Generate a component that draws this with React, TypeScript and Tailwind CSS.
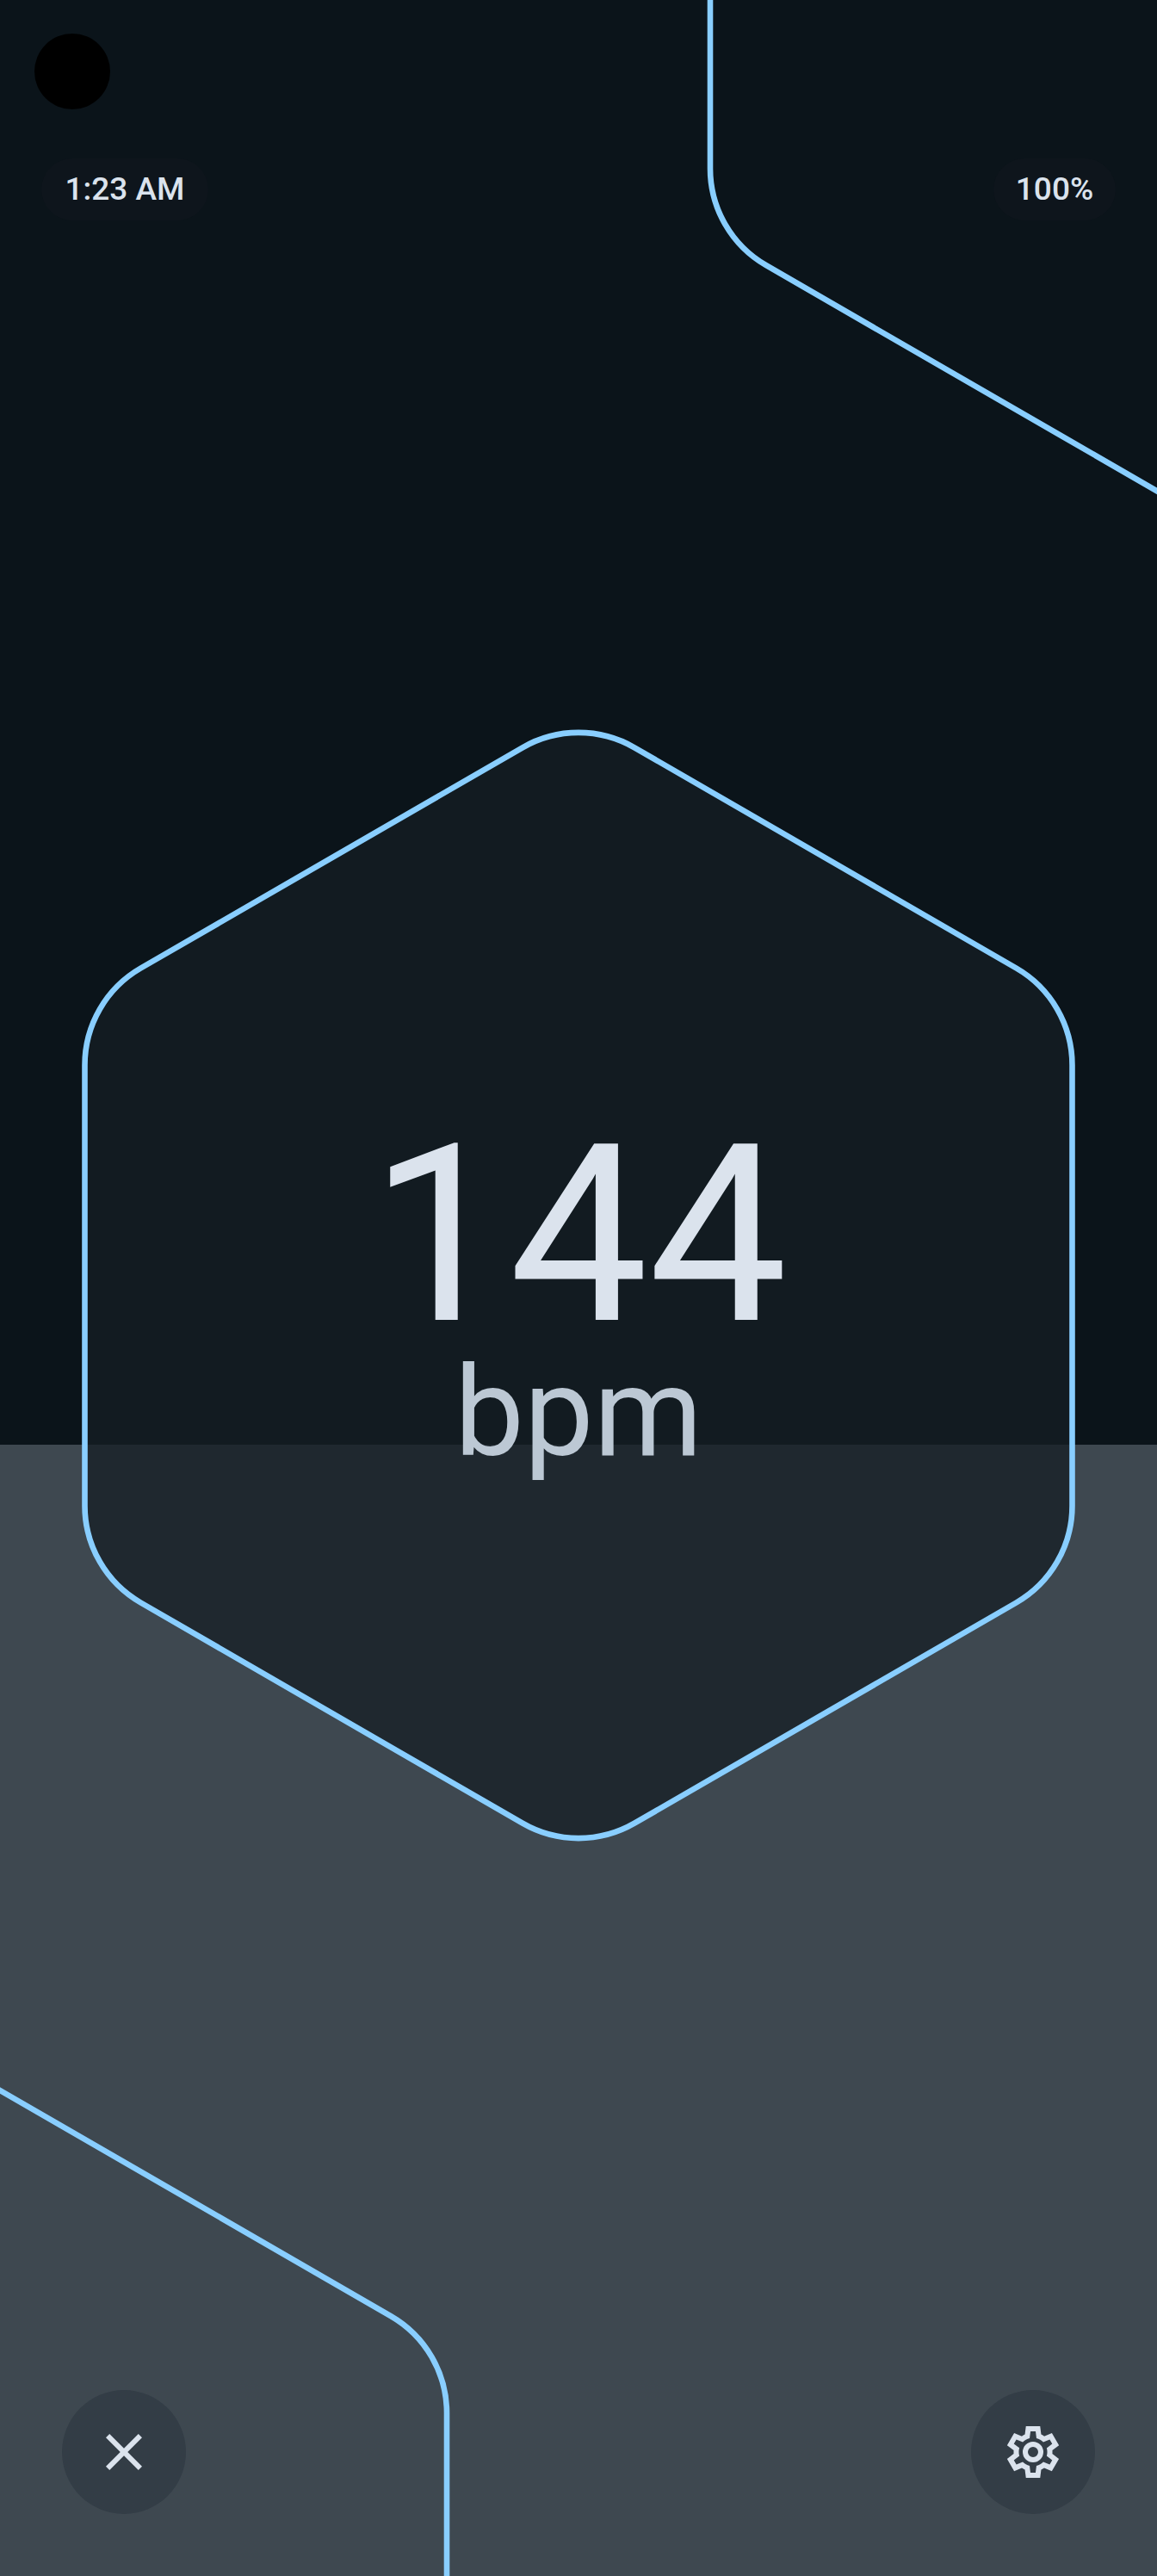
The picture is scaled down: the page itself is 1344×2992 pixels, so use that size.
import { MdClose } from "react-icons/md";

const OUTLINE = "#89ceff";

function Backdrop() {
  return (
    <div aria-hidden="true" className="absolute inset-0 flex flex-col">
      <div className="flex-[1678] bg-[#0b141a]" />
      <div className="flex-[1314] bg-[#3e4850]" />
    </div>
  );
}

function Hexagons() {
  return (
    <svg
      aria-hidden="true"
      viewBox="0 0 1344 2992"
      preserveAspectRatio="xMidYMid slice"
      className="absolute inset-0 h-full w-full"
      fill="none"
      stroke={OUTLINE}
      strokeWidth="6.6"
    >
      <path d="M825 -10V195.700A130 130 0 0 0 890 308.200L1364 581.900" />
      <path d="M-20 2416.400L454 2690.100A130 130 0 0 1 519 2802.600V3010" />
      <path
        d="M737 868.300L1180.500 1124.500A130 130 0 0 1 1245.500 1237V1749A130 130 0 0 1 1180.500 1861.500L737 2117.700A130 130 0 0 1 607 2117.700L163.500 1861.500A130 130 0 0 1 98.500 1749V1237A130 130 0 0 1 163.500 1124.500L607 868.300A130 130 0 0 1 737 868.300Z"
        fill="#161d24"
        fillOpacity="0.75"
      />
    </svg>
  );
}

function SettingsIcon() {
  return (
    <svg viewBox="0 0 24 24" className="size-18" fill="currentColor" aria-hidden="true">
      <path
        fillRule="evenodd"
        d="M9.250 22L8.850 18.800Q8.525 18.675 8.238 18.500T7.675 18.125L4.700 19.375L1.950 14.625L4.525 12.675Q4.500 12.500 4.500 12.338V11.663Q4.500 11.500 4.525 11.325L1.950 9.375L4.700 4.625L7.675 5.875Q7.950 5.675 8.250 5.500T8.850 5.200L9.250 2H14.750L15.150 5.200Q15.475 5.325 15.763 5.500T16.325 5.875L19.300 4.625L22.050 9.375L19.475 11.325Q19.500 11.500 19.500 11.663V12.338Q19.500 12.500 19.450 12.675L22.025 14.625L19.275 19.375L16.325 18.125Q16.050 18.325 15.750 18.500T15.150 18.800L14.750 22ZM11 20H12.975L13.325 17.350Q14.100 17.150 14.763 16.763T15.975 15.825L18.450 16.850L19.425 15.150L17.275 13.525Q17.400 13.175 17.450 12.788T17.500 12Q17.500 11.600 17.450 11.213T17.275 10.475L19.425 8.850L18.450 7.150L15.975 8.200Q15.425 7.625 14.763 7.238T13.325 6.650L13 4H11.025L10.675 6.650Q9.900 6.850 9.238 7.238T8.025 8.175L5.550 7.150L4.575 8.850L6.725 10.450Q6.600 10.825 6.550 11.200T6.500 12Q6.500 12.400 6.550 12.775T6.725 13.525L4.575 15.150L5.550 16.850L8.025 15.800Q8.575 16.375 9.238 16.763T10.675 17.350ZM12 8A4 4 0 1 0 12 16A4 4 0 1 0 12 8ZM12 10A2 2 0 1 1 12 14A2 2 0 1 1 12 10Z"
      />
    </svg>
  );
}

const pill =
  "flex h-18 items-center justify-center rounded-full bg-[#0e151c] px-6 text-[37px] leading-[48px] font-medium";
const roundButton =
  "flex size-36 items-center justify-center rounded-full bg-[#333d46]";

export default function App() {
  return (
    <div className="relative flex min-h-screen flex-col overflow-hidden text-[#dbe3ed] [font-family:Roboto,sans-serif]">
      <Backdrop />
      <Hexagons />

      <header className="relative flex flex-col pt-[39px]">
        <div aria-hidden="true" className="ml-10 size-22 rounded-full bg-black" />
        <div className="mt-[57px] flex justify-between px-12">
          <time className={`${pill} min-w-[194px]`}>1:23 AM</time>
          <span className={`${pill} min-w-[142px]`}>100%</span>
        </div>
      </header>

      <main className="relative flex flex-1 flex-col items-center justify-center pt-[6px]">
        <p className="text-[288px] leading-[244px]">144</p>
        <p className="text-[144px] leading-[168px] text-[#bcc8d4]">bpm</p>
      </main>

      <footer className="relative flex justify-between p-18 pt-0">
        <button type="button" aria-label="Close" className={roundButton}>
          <MdClose className="size-18" aria-hidden="true" />
        </button>
        <button type="button" aria-label="Settings" className={roundButton}>
          <SettingsIcon />
        </button>
      </footer>
    </div>
  );
}
